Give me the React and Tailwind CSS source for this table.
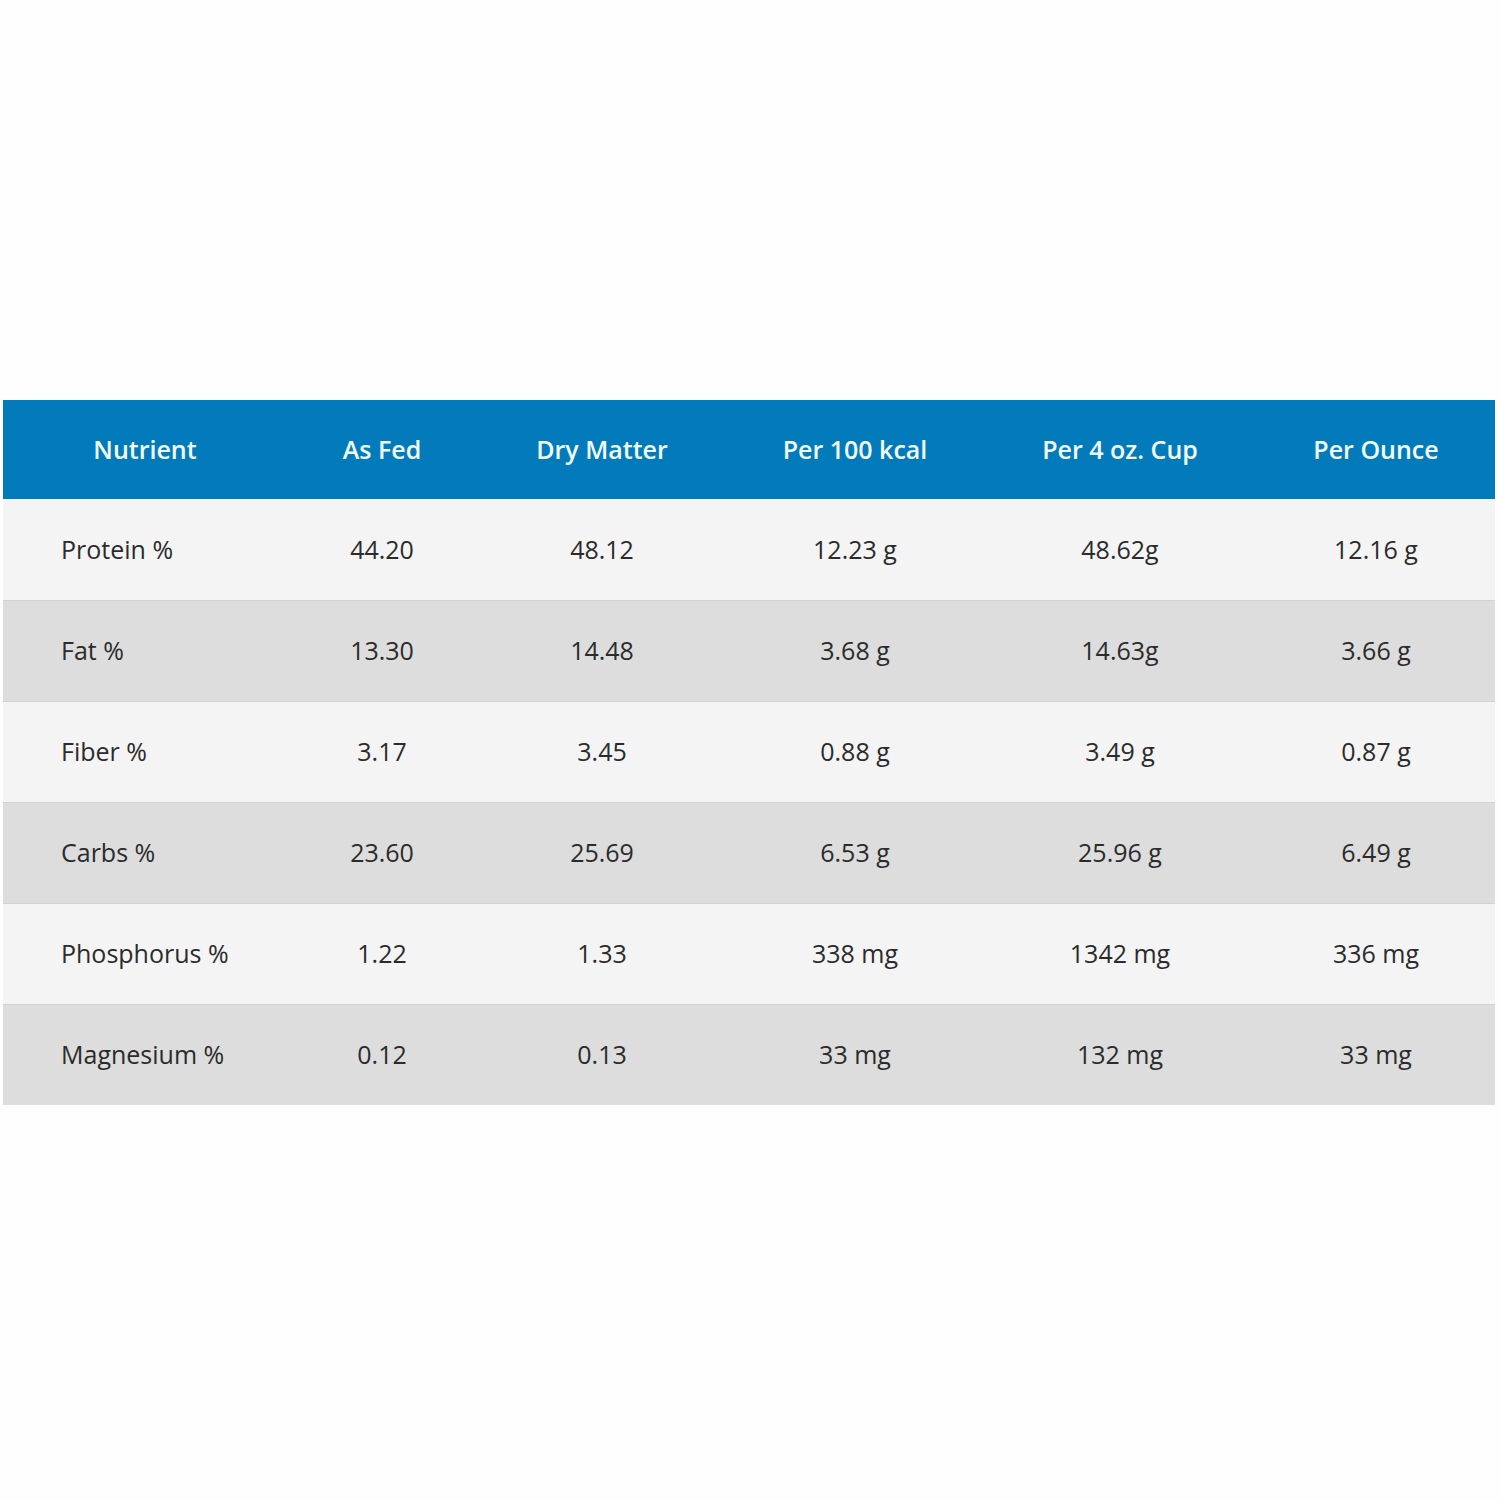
const COLS = [
  { label: "Nutrient", w: "w-[284px]" },
  { label: "As Fed", w: "w-[190px]" },
  { label: "Dry Matter", w: "w-[250px]" },
  { label: "Per 100 kcal", w: "w-[256px]" },
  { label: "Per 4 oz. Cup", w: "w-[274px]" },
  { label: "Per Ounce", w: "w-[238px]" },
];

const ROWS = [
  ["Protein %", "44.20", "48.12", "12.23 g", "48.62g", "12.16 g"],
  ["Fat %", "13.30", "14.48", "3.68 g", "14.63g", "3.66 g"],
  ["Fiber %", "3.17", "3.45", "0.88 g", "3.49 g", "0.87 g"],
  ["Carbs %", "23.60", "25.69", "6.53 g", "25.96 g", "6.49 g"],
  ["Phosphorus %", "1.22", "1.33", "338 mg", "1342 mg", "336 mg"],
  ["Magnesium %", "0.12", "0.13", "33 mg", "132 mg", "33 mg"],
];

export default function App() {
  return (
    <div className="w-[1500px] h-[1500px] bg-[#fefefe] pt-[400px] pl-[3px] font-['Open_Sans','Liberation_Sans',sans-serif]">
      <table className="w-[1492px] border-collapse table-fixed">
        <thead>
          <tr className="h-[99px] bg-[#037bba]">
            {COLS.map((c) => (
              <th key={c.label} className={`${c.w} text-center text-[25px] font-semibold text-[#f2fbff] p-0`}>
                {c.label}
              </th>
            ))}
          </tr>
        </thead>
        <tbody>
          {ROWS.map((r, i) => (
            <tr
              key={r[0]}
              className={`h-[101px] border-t border-[#d2d2d2] ${i % 2 === 0 ? "bg-[#f4f4f4]" : "bg-[#dddddd]"} ${i === 0 ? "border-t-0" : ""}`}
            >
              {r.map((v, j) => (
                <td
                  key={j}
                  className={`text-[25px] text-[#2b2b2b] p-0 ${j === 0 ? "text-left pl-[58px]" : "text-center"}`}
                >
                  {v}
                </td>
              ))}
            </tr>
          ))}
        </tbody>
      </table>
    </div>
  );
}
